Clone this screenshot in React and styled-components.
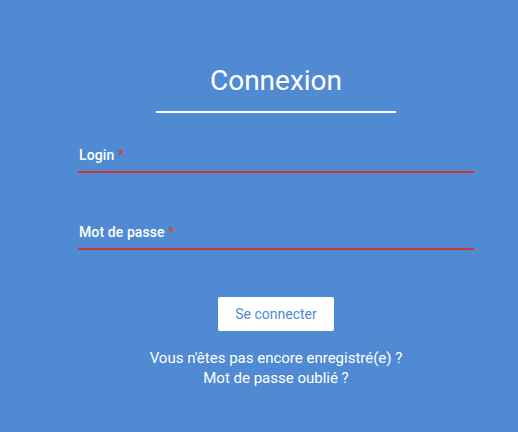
import React from 'react'
import styled, { createGlobalStyle } from 'styled-components'

const GlobalStyle = createGlobalStyle`
    html, body {
        margin: 0;
        padding: 0;
        background-color: #4f8ad3;
        font-family: 'Roboto', 'Liberation Sans', sans-serif;
    }
`

const Page = styled.div`
    width: 518px;
    height: 432px;
    background-color: #4f8ad3;
    display: flex;
    justify-content: flex-start;
`

const LoginBox = styled.form`
    width: 396px;
    margin-left: 78px;
    padding-top: 63px;
    display: flex;
    flex-direction: column;
    align-items: center;
`

const Title = styled.h1`
    margin: 0;
    width: 240px;
    text-align: center;
    font-size: 28px;
    font-weight: 400;
    color: #fff;
    line-height: 36px;
    padding-bottom: 12px;
    border-bottom: 2px solid #fff;
`

const Field = styled.div`
    width: 100%;
    display: flex;
    flex-direction: column;
    margin-top: ${props => props.top}px;
`

const Label = styled.label`
    font-size: 14px;
    font-weight: 500;
    color: #fff;
    line-height: 16px;
    padding-left: 1px;
    letter-spacing: 0.1px;

    span {
        color: #d0453c;
    }
`

const Input = styled.input`
    border: 0;
    border-bottom: 2px solid #c9383a;
    background: transparent;
    outline: none;
    height: 8px;
    padding: 0;
    color: #fff;
    font-family: inherit;
`

const SubmitButton = styled.button`
    margin-top: 47px;
    width: 116px;
    height: 34px;
    border: 0;
    border-radius: 2px;
    background-color: #fff;
    color: #4f8ad3;
    font-family: 'Roboto', 'Liberation Sans', sans-serif;
    font-size: 14px;
    cursor: pointer;
`

const Links = styled.div`
    margin-top: 17px;
    display: flex;
    flex-direction: column;
    align-items: center;

    a {
        color: #fff;
        font-size: 15px;
        line-height: 20px;
        text-decoration: none;
    }
`

export default function App() {
    return (
        <Page>
            <GlobalStyle />
            <LoginBox onSubmit={e => e.preventDefault()}>
                <Title>Connexion</Title>
                <Field top={34}>
                    <Label>Login <span>*</span></Label>
                    <Input type="text" name="login" />
                </Field>
                <Field top={51}>
                    <Label>Mot de passe <span>*</span></Label>
                    <Input type="password" name="password" />
                </Field>
                <SubmitButton type="submit">Se connecter</SubmitButton>
                <Links>
                    <a href="#">Vous n'êtes pas encore enregistré(e) ?</a>
                    <a href="#">Mot de passe oublié ?</a>
                </Links>
            </LoginBox>
        </Page>
    )
}
